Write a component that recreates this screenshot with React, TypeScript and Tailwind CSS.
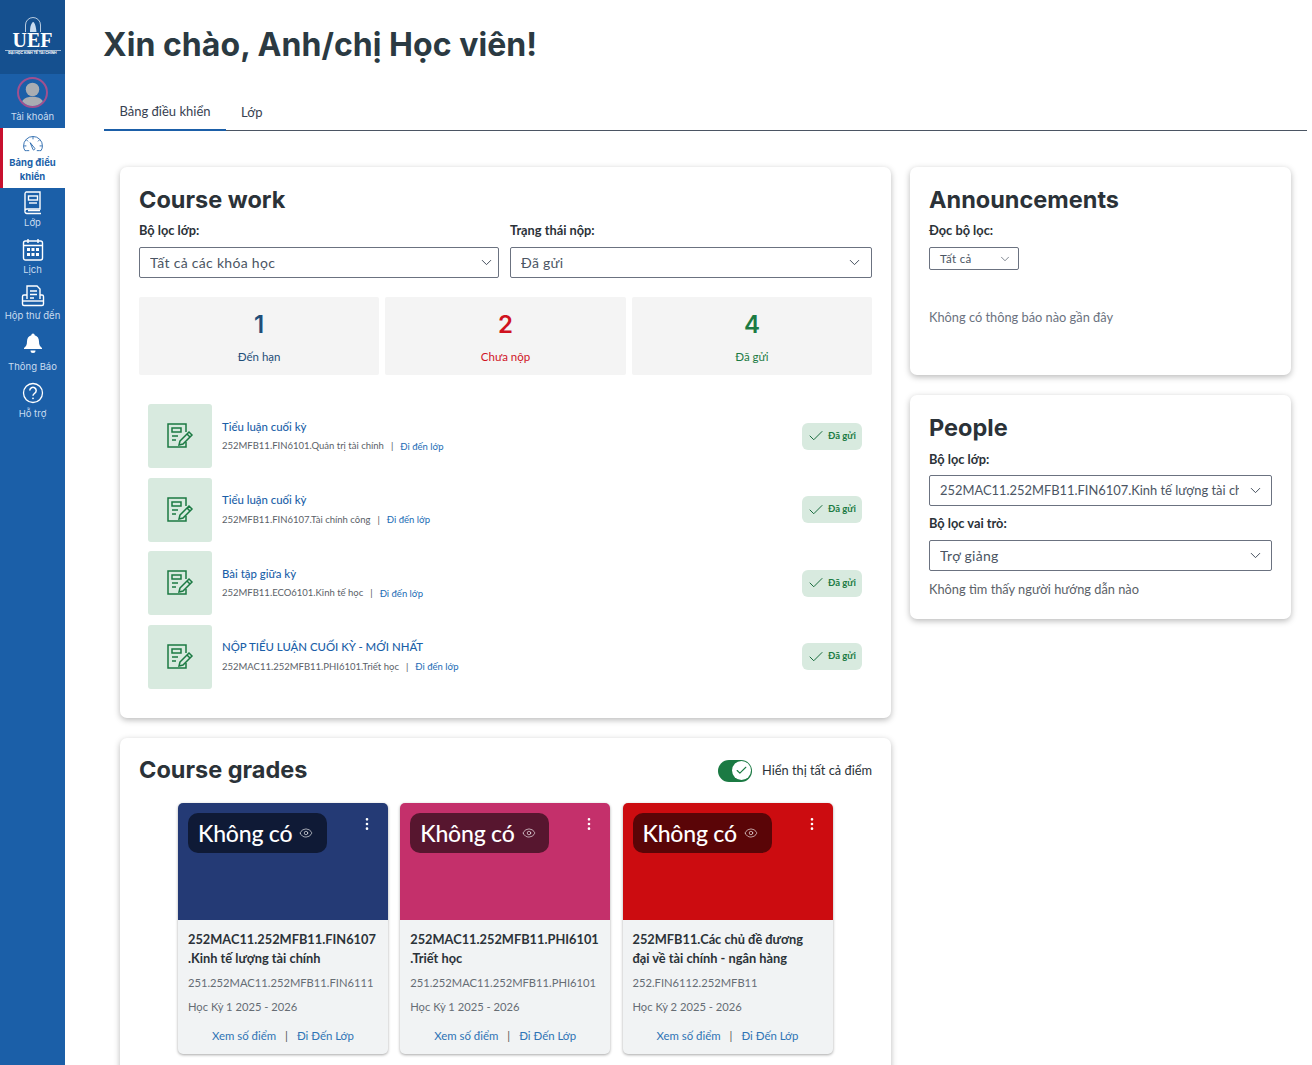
import React from "react";
import { Check, Eye, ChevronDown, EllipsisVertical } from "lucide-react";

const heading = "font-['Inter','Noto_Sans',sans-serif]";

function NavItem({ label, icon, h, lm = "mt-[1px]" }: { label: string; icon: React.ReactNode; h: string; lm?: string }) {
  return (
    <div className={`flex flex-col items-center justify-start ${h}`}>
      <div className="w-[24px] h-[24px] flex items-center justify-center">{icon}</div>
      <div className={`${lm} text-[9.5px] leading-[14px] text-[#c9dcf0] whitespace-nowrap font-['Inter',sans-serif]`}>{label}</div>
    </div>
  );
}

const Book = (
  <svg width="20" height="24" viewBox="0 0 20 24" fill="none" stroke="#fff" strokeWidth="1.4">
    <path d="M3 1h14v17H4a2 2 0 0 0-2 2v-17a2 2 0 0 1 1-2z" />
    <path d="M2 20a2 2 0 0 0 2 2.500h14M5 19.500h12" />
    <rect x="5.500" y="5" width="9" height="4" />
    <path d="M6 12h8" />
  </svg>
);
const Calendar = (
  <svg width="22" height="24" viewBox="0 0 22 24" fill="none" stroke="#fff" strokeWidth="1.4">
    <rect x="1.500" y="3" width="19" height="19" rx="2" />
    <path d="M1.500 7.500h19M6 1v4M16 1v4" />
    <g fill="#fff" stroke="none">
      <rect x="5" y="10" width="3" height="3" /><rect x="9.500" y="10" width="3" height="3" /><rect x="14" y="10" width="3" height="3" />
      <rect x="5" y="15" width="3" height="3" /><rect x="9.500" y="15" width="3" height="3" /><rect x="14" y="15" width="3" height="3" />
    </g>
  </svg>
);
const Inbox = (
  <svg width="24" height="24" viewBox="0 0 24 24" fill="none" stroke="#fff" strokeWidth="1.4">
    <path d="M6 15V2h10l3 3v10" />
    <path d="M9 7h7M9 10.500h7M9 14h4" />
    <path d="M6 11H3a1.500 1.500 0 0 0-1.500 1.500V20A1.500 1.500 0 0 0 3 21.500h18a1.500 1.500 0 0 0 1.500-1.500v-7.500A1.500 1.500 0 0 0 21 11h-2" />
    <path d="M2 17h20" />
  </svg>
);
const Bell = (
  <svg width="22" height="22" viewBox="0 0 22 22" fill="#fff">
    <path d="M11 1.500a1.700 1.700 0 0 1 1.700 1.700c3 .8 4.300 3.300 4.300 6.300 0 3.500 1 5 3 6.500v1H2v-1c2-1.500 3-3 3-6.500 0-3 1.300-5.500 4.300-6.300A1.700 1.700 0 0 1 11 1.500z" />
    <path d="M8.500 18.500h5a2.500 2.500 0 0 1-5 0z" />
  </svg>
);
const Help = (
  <svg width="22" height="22" viewBox="0 0 22 22" fill="none" stroke="#fff" strokeWidth="1.300">
    <circle cx="11" cy="11" r="9.500" />
    <path d="M7.800 8.500a3.200 3.200 0 1 1 4.800 2.800c-1 .6-1.600 1.200-1.600 2.500" strokeWidth="1.500" />
    <circle cx="11" cy="16.300" r="0.900" fill="#fff" stroke="none" />
  </svg>
);
const Gauge = (
  <svg width="22" height="17" viewBox="0 0 22 18" fill="none" stroke="#1b5fa8" strokeWidth="0.9">
    <path d="M4 15.500H2.500A9.500 9.500 0 0 1 1 10.500a10 10 0 0 1 20 0 9.500 9.500 0 0 1-1.500 5H18" />
    <path d="M4 15.500h3M15 15.500h3M8 7l3 7.500a1.300 1.300 0 0 0 2-1.300z" />
    <path d="M11 1v2.500M4 4l1.700 1.700M18 4l-1.700 1.700M1.500 10.500H4M18 10.500h2.500" />
  </svg>
);

function Sidebar() {
  return (
    <aside className="w-[65px] shrink-0 bg-[#1b5fa8] flex flex-col font-['Inter',sans-serif]">
      <div className="h-[74px] bg-[#15508f] flex flex-col items-center pt-[16px]">
        <svg width="22" height="17" viewBox="0 0 22 17" fill="none" stroke="#dfe8f2" strokeWidth="0.8">
          <path d="M3.500 16V9a7.500 7.500 0 0 1 15 0v7" />
          <path d="M8 16c0-4 .5-7 2-9 .5-1 1.500-1.500 2-.5 1.500 2 2 5.500 2.500 9.500z" fill="#c9dcf0" stroke="none" />
        </svg>
        <div className="font-['Liberation_Serif',serif] font-bold text-white text-[20px] leading-[15px]">UEF</div>
        <div className="w-[56px] border-t border-white/60 mt-[2px]" />
        <div className="text-[3.500px] leading-[5px] text-white font-bold whitespace-nowrap">ĐẠI HỌC KINH TẾ TÀI CHÍNH</div>
      </div>
      <div className="h-[54px] flex flex-col items-center pt-[3px]">
        <div className="w-[31px] h-[31px] rounded-full border-2 border-[#a0508f] overflow-hidden flex justify-center items-center">
          <svg width="27" height="27" viewBox="0 0 26 26" fill="#a9adb2">
            <circle cx="13" cy="10" r="6.500" />
            <path d="M2 26c0-7 5-9 11-9s11 2 11 9z" />
          </svg>
        </div>
        <div className="mt-[2px] text-[9.5px] leading-[14px] text-[#c9dcf0]">Tài khoản</div>
      </div>
      <div className="h-[60px] bg-white border-l-[3px] border-[#c8102e] flex flex-col items-center pt-[8px] pr-[3px]">
        {Gauge}
        <div className="mt-[3px] text-[9.5px] leading-[14px] font-bold text-[#1b5fa8] text-center">Bảng điều<br />khiển</div>
      </div>
      <NavItem label="Lớp" icon={Book} h="h-[47px] pt-[3px]" />
      <NavItem label="Lịch" icon={Calendar} h="h-[47px] pt-[3px]" />
      <NavItem label="Hộp thư đến" icon={Inbox} h="h-[49px] pt-[2px]" />
      <NavItem label="Thông Báo" icon={Bell} h="h-[49px]" lm="mt-[5px]" />
      <NavItem label="Hỗ trợ" icon={Help} h="h-[46px] pt-[1px]" lm="mt-[2px]" />
    </aside>
  );
}

function Select({ value, className = "", text = "text-[14px] tracking-[0.3px]", pad = "pr-[8px]" }: { value: string; className?: string; text?: string; pad?: string }) {
  return (
    <div className={`h-[31px] border border-[#6b7280] rounded-[2px] bg-white flex items-center pl-[10px] gap-2 ${pad} ${className}`}>
      <span className={`flex-1 min-w-0 overflow-hidden whitespace-nowrap text-[#4b5563] ${text}`}>{value}</span>
      <ChevronDown className="w-[17px] h-[17px] text-[#374151] shrink-0" strokeWidth={1.3} />
    </div>
  );
}

function Stat({ n, label, color }: { n: string; label: string; color: string }) {
  return (
    <div className="flex-1 h-[78px] bg-[#f4f4f4] rounded-[2px] flex flex-col items-center pt-[13px]">
      <div className={`text-[24px] leading-[30px] font-semibold ${color} ${heading}`}>{n}</div>
      <div className={`mt-[9px] text-[11.5px] leading-[16px] ${color}`}>{label}</div>
    </div>
  );
}

const TaskIcon = (
  <svg width="28" height="28" viewBox="0 0 28 28" fill="none" stroke="#1b7a43" strokeWidth="1.500">
    <path d="M20 10V2H2v23h18v-5" />
    <rect x="6" y="6" width="9" height="4" />
    <path d="M6 14h6M6 18h4" />
    <path d="M14 19l9-9 3 3-9 9-4 1z" />
    <path d="M21 12l3 3" />
  </svg>
);

function Task({ title, code }: { title: string; code: string }) {
  return (
    <div className="flex items-center pl-[9px] pr-[10px]">
      <div className="w-[64px] h-[64px] rounded-[3px] bg-[#d8eadf] flex items-center justify-center">{TaskIcon}</div>
      <div className="ml-[10px] flex-1">
        <div className="text-[11.4px] leading-[16px] text-[#1b5fa8] font-medium">{title}</div>
        <div className="mt-[4px] flex items-center text-[9.5px] leading-[14px] text-[#5b6168]">
          <span>{code}</span>
          <span className="mx-[7px] text-[#555]">|</span>
          <span className="text-[#1b6cb5] mt-[1px]">Đi đến lớp</span>
        </div>
      </div>
      <div className="w-[60px] h-[27px] rounded-[6px] bg-[#d8eadf] flex items-center pl-[5px] gap-[3px]">
        <Check className="w-[18px] h-[18px] text-[#14693a]" strokeWidth={1.3} />
        <span className="text-[9.5px] font-bold text-[#1b7a43] whitespace-nowrap">Đã gửi</span>
      </div>
    </div>
  );
}

function GradeCard({ color, pill, t1, t2, code, term }: { color: string; pill: string; t1: string; t2: string; code: string; term: string }) {
  return (
    <div className="w-[210px] h-[251px] rounded-[5px] bg-[#f1f3f4] shadow-[0_1px_3px_rgba(0,0,0,0.35)] overflow-hidden flex flex-col">
      <div className={`h-[117px] ${color} pl-[10px] pt-[10px] pr-[15px] flex justify-between items-start`}>
        <div className={`w-[139px] h-[40px] rounded-[10px] ${pill} flex items-center pl-[10px] gap-[7px]`}>
          <span className="text-[23px] font-medium text-white whitespace-nowrap tracking-[-0.2px]">Không có</span>
          <Eye className="w-[14px] h-[14px] text-white/80" strokeWidth={1.3} />
        </div>
        <EllipsisVertical className="w-[16px] h-[16px] text-white mt-[3px] -mr-[2px]" strokeWidth={2} />
      </div>
      <div className="px-[10px] pt-[10px] flex-1 flex flex-col">
        <div className="text-[12.8px] leading-[19px] font-bold text-[#2b3238] whitespace-nowrap">{t1}<br />{t2}</div>
        <div className="mt-[6px] text-[11.2px] leading-[18px] text-[#666d74] whitespace-nowrap">{code}</div>
        <div className="mt-[6px] text-[11.2px] leading-[18px] text-[#666d74]">{term}</div>
        <div className="mt-[12px] flex justify-center items-center text-[11.4px] leading-[16px] text-[#2f74b5]">
          <span>Xem số điểm</span>
          <span className="mx-[9px] text-[#555]">|</span>
          <span>Đi Đến Lớp</span>
        </div>
      </div>
    </div>
  );
}

const cardCls = "bg-white rounded-[7px] shadow-[0_2px_6px_rgba(0,0,0,0.28)]";
const h2Cls = `text-[23.5px] leading-[30px] font-bold text-[#2b3238] ${heading}`;

export default function App() {
  return (
    <div className="flex h-[1065px] w-[1312px] overflow-hidden bg-white font-['Lato',sans-serif] text-[#2b3238]">
      <Sidebar />
      <main className="flex-1 min-w-0 pl-[39px] pr-[5px]">
        <h1 className={`mt-[23px] -ml-[1px] text-[32px] leading-[44px] font-bold tracking-[0.05px] text-[#2b3a42] ${heading}`}>Xin chào, Anh/chị Học viên!</h1>
        <nav className="mt-[24px] h-[40px] border-b border-[#4b5563] flex text-[13px] text-[#374151]">
          <div className="w-[122px] h-[40px] border-b-2 border-[#1b5fa8] flex items-center justify-center pt-[3px]">Bảng điều khiển</div>
          <div className="ml-[15px] h-[40px] flex items-center pt-[3px]">Lớp</div>
        </nav>
        <div className="mt-[36px] ml-[16px] flex gap-[19px] items-start">
          <div className="w-[771px] shrink-0 flex flex-col gap-[20px]">
            <section className={`${cardCls} h-[551px] px-[19px] pt-[18px]`}>
              <h2 className={h2Cls}>Course work</h2>
              <div className="mt-[6px] flex gap-[11px]">
                <div className="w-[360px]">
                  <div className="text-[12.8px] leading-[18px] font-bold mb-[8px]">Bộ lọc lớp:</div>
                  <Select pad="pr-[3px]" value="Tất cả các khóa học" />
                </div>
                <div className="w-[362px]">
                  <div className="text-[12.8px] leading-[18px] font-bold mb-[8px]">Trạng thái nộp:</div>
                  <Select value="Đã gửi" />
                </div>
              </div>
              <div className="mt-[19px] flex gap-[6.250px]">
                <Stat n="1" label="Đến hạn" color="text-[#1f4e79]" />
                <Stat n="2" label="Chưa nộp" color="text-[#d0121f]" />
                <Stat n="4" label="Đã gửi" color="text-[#1b7a43]" />
              </div>
              <div className="mt-[29px] flex flex-col gap-[9.500px]">
                <Task title="Tiểu luận cuối kỳ" code="252MFB11.FIN6101.Quản trị tài chính" />
                <Task title="Tiểu luận cuối kỳ" code="252MFB11.FIN6107.Tài chính công" />
                <Task title="Bài tập giữa kỳ" code="252MFB11.ECO6101.Kinh tế học" />
                <Task title="NỘP TIỂU LUẬN CUỐI KỲ - MỚI NHẤT" code="252MAC11.252MFB11.PHI6101.Triết học" />
              </div>
            </section>
            <section className={`${cardCls} h-[400px] px-[19px] pt-[17px]`}>
              <div className="flex items-center justify-between h-[30px]">
                <h2 className={h2Cls}>Course grades</h2>
                <div className="flex items-center gap-[10px] pt-[1px]">
                  <div className="w-[34px] h-[22px] rounded-full bg-[#1b7a43] flex items-center justify-end pr-[1.500px]">
                    <div className="w-[19px] h-[19px] rounded-full bg-white flex items-center justify-center">
                      <Check className="w-[13px] h-[13px] text-[#1b7a43]" strokeWidth={2} />
                    </div>
                  </div>
                  <span className="text-[12.8px] text-[#2b3238]">Hiển thị tất cả điểm</span>
                </div>
              </div>
              <div className="mt-[18px] pl-[39px] flex gap-[12.250px]">
                <GradeCard color="bg-[#243a75]" pill="bg-[#0f1a36]" t1="252MAC11.252MFB11.FIN6107" t2=".Kinh tế lượng tài chính" code="251.252MAC11.252MFB11.FIN6111" term="Học Kỳ 1 2025 - 2026" />
                <GradeCard color="bg-[#c4306b]" pill="bg-[#57162f]" t1="252MAC11.252MFB11.PHI6101" t2=".Triết học" code="251.252MAC11.252MFB11.PHI6101" term="Học Kỳ 1 2025 - 2026" />
                <GradeCard color="bg-[#cc0c10]" pill="bg-[#5a0507]" t1="252MFB11.Các chủ đề đương" t2="đại về tài chính - ngân hàng" code="252.FIN6112.252MFB11" term="Học Kỳ 2 2025 - 2026" />
              </div>
            </section>
          </div>
          <div className="w-[381px] shrink-0 flex flex-col gap-[20px]">
            <section className={`${cardCls} h-[208px] px-[19px] pt-[18px]`}>
              <h2 className={h2Cls}>Announcements</h2>
              <div className="mt-[6px] text-[12.8px] leading-[18px] font-bold">Đọc bộ lọc:</div>
              <div className="mt-[8px] w-[90px] h-[23px] border border-[#6b7280] rounded-[2px] flex items-center pl-[10px] pr-[6px] justify-between">
                <span className="text-[11.5px] text-[#4b5563] tracking-[0.3px]">Tất cả</span>
                <ChevronDown className="w-[14px] h-[14px] text-[#4b5563]" strokeWidth={1.2} />
              </div>
              <div className="mt-[38px] text-[12.8px] leading-[18px] text-[#6b7280]">Không có thông báo nào gần đây</div>
            </section>
            <section className={`${cardCls} h-[224px] px-[19px] pt-[18px]`}>
              <h2 className={h2Cls}>People</h2>
              <div className="mt-[7px] text-[12.8px] leading-[18px] font-bold">Bộ lọc lớp:</div>
              <Select className="mt-[7px]" pad="pr-[7px]" text="text-[12.9px]" value="252MAC11.252MFB11.FIN6107.Kinh tế lượng tài chính" />
              <div className="mt-[8px] text-[12.8px] leading-[18px] font-bold">Bộ lọc vai trò:</div>
              <Select className="mt-[8px]" pad="pr-[7px]" value="Trợ giảng" />
              <div className="mt-[9px] text-[12.8px] leading-[18px] text-[#5b6168]">Không tìm thấy người hướng dẫn nào</div>
            </section>
          </div>
        </div>
      </main>
    </div>
  );
}
